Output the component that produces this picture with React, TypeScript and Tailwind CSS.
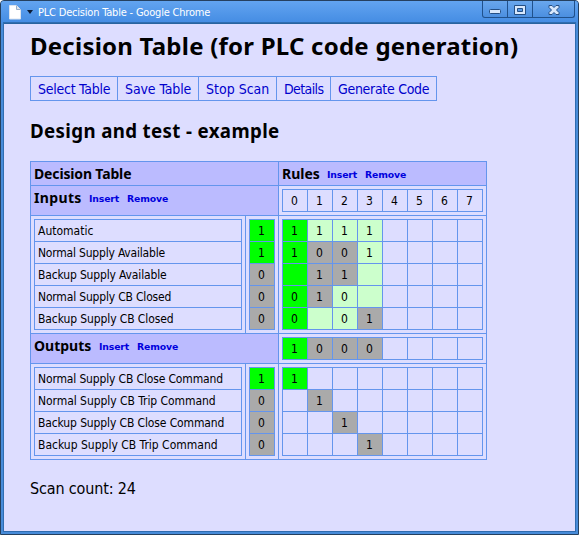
import React from "react";

const bg: Record<string, string> = {
  g: "bg-[#00ff00]",
  l: "bg-[#ccffcc]",
  x: "bg-[#aaaaaa]",
  n: "",
};

// Each cell is a colour key followed by its value.
const inputRules = [
  ["g1", "l1", "l1", "l1", "n", "n", "n", "n"],
  ["g1", "x0", "x0", "l1", "n", "n", "n", "n"],
  ["g", "x1", "x1", "l", "n", "n", "n", "n"],
  ["g0", "x1", "l0", "l", "n", "n", "n", "n"],
  ["g0", "l", "l0", "x1", "n", "n", "n", "n"],
];
const outputRules = [
  ["g1", "n", "n", "n", "n", "n", "n", "n"],
  ["n", "x1", "n", "n", "n", "n", "n", "n"],
  ["n", "n", "x1", "n", "n", "n", "n", "n"],
  ["n", "n", "n", "x1", "n", "n", "n", "n"],
];

function Cells({ rows }: { rows: string[][] }) {
  return (
    <div className="w-fit border-l border-t border-[#6495ed]">
      {rows.map((row, i) => (
        <div key={i} className="flex">
          {row.map((c, j) => (
            <div key={j} className={`h-[22px] w-[25px] border-b border-r border-[#6495ed] pr-px text-center text-[12px] leading-[22px] ${bg[c[0]]}`}>
              {c.slice(1)}
            </div>
          ))}
        </div>
      ))}
    </div>
  );
}

function Labels({ items }: { items: [string, string][] }) {
  return (
    <div className="border-l border-t border-[#6495ed]">
      {items.map(([text, track]) => (
        <div key={text} className="h-[22px] border-b border-r border-[#6495ed] pl-[3px] text-[12px] leading-[22px]">
          <span className={`whitespace-nowrap ${track}`}>{text}</span>
        </div>
      ))}
    </div>
  );
}

function Actions() {
  return (
    <span className="ml-[8px] flex gap-[8px] pt-px font-['DejaVu_Sans',sans-serif] text-[9.3px] tracking-[-0.15px] text-[#0000dd]">
      <a>Insert</a>
      <a>Remove</a>
    </span>
  );
}

const cell = "border-b border-r border-[#6495ed]";
const heading = "bg-[#bbbbff] pl-[3px] font-['Noto_Sans',sans-serif] text-[14px] font-bold leading-[24px]";

export default function App() {
  return (
    <div className="flex h-[535px] w-[579px] flex-col overflow-hidden rounded-t-[4px] border border-[#25405f] bg-[#478bd9] font-['DejaVu_Sans_Condensed','DejaVu_Sans',sans-serif] text-black">
      <header className="flex h-[22px] shrink-0 bg-linear-to-b from-[#62a4f0] to-[#448ce3] pl-[8px]">
        <svg width="12" height="15" viewBox="0 0 12 15" className="mt-[4px]">
          <path d="M.5.5h7l4 4v9.500h-11z" fill="#fff" stroke="#dbe3ef" />
          <path d="M7.500.5v4h4" fill="#dfe5ed" stroke="#9aaec8" />
        </svg>
        <svg width="6" height="4" viewBox="0 0 6 4" className="ml-[6px] mt-[9px]"><path d="M0 0h6L3 4z" fill="#0b1c36" /></svg>
        <span className="ml-[5px] whitespace-nowrap text-[11px] leading-[23px] tracking-[-0.2px] text-white">PLC Decision Table - Google Chrome</span>
        <div className="ml-auto mr-[3px] flex h-[17px] rounded-b-[3px] border border-t-0 border-[#20518c] bg-linear-to-b from-[#69a7ed] to-[#4b8fe0]">
          <div className="flex w-[25px] items-end justify-center border-r border-[#20518c] pb-[2px]">
            <svg width="12" height="6" viewBox="0 0 12 6"><rect x=".5" y=".5" width="11" height="4" rx="1" fill="#d8e8fc" stroke="#244f85" /></svg>
          </div>
          <div className="flex w-[25px] items-center justify-center border-r border-[#20518c]">
            <svg width="12" height="11" viewBox="0 0 12 11"><path fillRule="evenodd" d="M.5 1.500h11v9H.5zM3.500 4.500v3h5v-3z" fill="#d8e8fc" stroke="#244f85" /></svg>
          </div>
          <div className="flex w-[41px] items-center justify-center">
            <svg width="12" height="11" viewBox="0 0 12 11"><path d="M1 1.500h3l2 2 2-2h3v2L8.500 6l2.500 2.500v2H8l-2-2-2 2H1v-2L3.500 6 1 3.500z" fill="#d8e8fc" stroke="#244f85" /></svg>
          </div>
        </div>
      </header>
      <main className="mx-[3px] mb-[3px] flex-1 overflow-hidden border-t border-[#28639f] bg-[#ddddff] pl-[26px] shadow-[0_0_0_1px_#2f6cb0]">
        <h1 className="mt-[7px] h-[45px] whitespace-nowrap font-['Noto_Sans',sans-serif] text-[24px] font-bold leading-[30px] tracking-[0.23px]">Decision Table (for PLC code generation)</h1>
        <nav className="flex h-[25px] w-fit border-l border-t border-[#6495ed] text-[14px] leading-[24px] text-[#0000cc]">
          <a className={`w-[87px] whitespace-nowrap pl-[7px] tracking-[-0.25px] ${cell}`}>Select Table</a>
          <a className={`w-[81px] whitespace-nowrap pl-[7px] tracking-[-0.1px] ${cell}`}>Save Table</a>
          <a className={`w-[78px] whitespace-nowrap pl-[7px] ${cell}`}>Stop Scan</a>
          <a className={`w-[54px] whitespace-nowrap pl-[7px] tracking-[-0.6px] ${cell}`}>Details</a>
          <a className={`w-[106px] whitespace-nowrap pl-[7px] tracking-[-0.3px] ${cell}`}>Generate Code</a>
        </nav>
        <h2 className="mt-[18px] h-[42px] whitespace-nowrap font-['Noto_Sans',sans-serif] text-[18.7px] font-bold leading-[24px] tracking-[0.36px]">Design and test - example</h2>
        <div className="grid w-[457px] grid-cols-[215px_33px_208px] grid-rows-[24px_30px_118px_30px_96px] border-l border-t border-[#6495ed]">
          <div className={`col-span-2 tracking-[-0.15px] ${heading} ${cell}`}>Decision Table</div>
          <div className={`flex ${heading} ${cell}`}><span className="w-[37px]">Rules</span><Actions /></div>
          <div className={`col-span-2 flex ${heading} ${cell}`}><span className="w-[47px] tracking-[0.35px]">Inputs</span><Actions /></div>
          <div className={`p-[3px] ${cell}`}><Cells rows={[["n0", "n1", "n2", "n3", "n4", "n5", "n6", "n7"]]} /></div>

          <div className={`p-[3px] ${cell}`}>
            <Labels items={[["Automatic", ""], ["Normal Supply Available", "tracking-[-0.2px]"], ["Backup Supply Available", "tracking-[-0.15px]"], ["Normal Supply CB Closed", "tracking-[-0.18px]"], ["Backup Supply CB Closed", "tracking-[-0.1px]"]]} />
          </div>
          <div className={`p-[3px] ${cell}`}><Cells rows={[["g1"], ["g1"], ["x0"], ["x0"], ["x0"]]} /></div>
          <div className={`p-[3px] ${cell}`}><Cells rows={inputRules} /></div>

          <div className={`col-span-2 flex ${heading} ${cell}`}><span className="w-[57px]">Outputs</span><Actions /></div>
          <div className={`p-[3px] ${cell}`}><Cells rows={[["g1", "x0", "x0", "x0", "n", "n", "n", "n"]]} /></div>

          <div className={`p-[3px] ${cell}`}>
            <Labels items={[["Normal Supply CB Close Command", "tracking-[-0.15px]"], ["Normal Supply CB Trip Command", "tracking-[-0.05px]"], ["Backup Supply CB Close Command", "tracking-[-0.12px]"], ["Backup Supply CB Trip Command", ""]]} />
          </div>
          <div className={`p-[3px] ${cell}`}><Cells rows={[["g1"], ["x0"], ["x0"], ["x0"]]} /></div>
          <div className={`p-[3px] ${cell}`}><Cells rows={outputRules} /></div>
        </div>
        <p className="mt-[17px] whitespace-nowrap text-[16px] leading-[24px] tracking-[-0.15px]">Scan count: 24</p>
      </main>
    </div>
  );
}
